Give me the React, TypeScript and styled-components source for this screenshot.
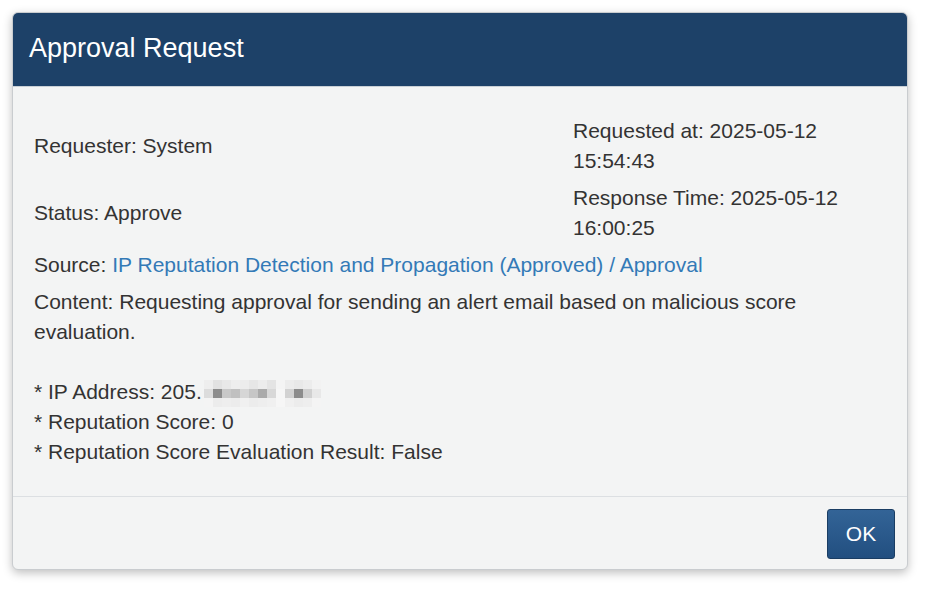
import React from "react";
import styled, { createGlobalStyle } from "styled-components";

const Global = createGlobalStyle`
  html, body { margin: 0; padding: 0; background: #ffffff; }
  body { font-family: "Liberation Sans", Arial, sans-serif; }
`;

const Page = styled.div`
  width: 931px;
  height: 593px;
  padding: 12px 23px 23px 12px;
  box-sizing: border-box;
  background: #ffffff;
`;

const Modal = styled.div`
  width: 896px;
  height: 558px;
  box-sizing: border-box;
  display: flex;
  flex-direction: column;
  background: #f3f4f4;
  border: 1px solid #c9cccf;
  border-radius: 6px;
  box-shadow: 0 3px 10px rgba(0, 0, 0, 0.25);
  overflow: hidden;
`;

const Header = styled.div`
  height: 74px;
  flex: none;
  background: #1d4168;
  display: flex;
  align-items: center;
  padding: 0 16px 4px;
  border-bottom: 1px solid #c9d0d6;
  box-sizing: border-box;
`;

const Title = styled.h1`
  margin: 0;
  color: #ffffff;
  font-weight: 400;
  font-size: 27px;
  line-height: 30px;
`;

const Body = styled.div`
  flex: 1;
  padding: 29px 22px 0 21px;
  color: #333333;
  font-size: 21px;
  line-height: 30px;
  display: flex;
  flex-direction: column;
  gap: 7px;
`;

const Row = styled.div`
  display: grid;
  grid-template-columns: 539px 312px;
  align-items: center;
`;

const Line = styled.div<{ $gap?: number }>`
  margin-top: ${(p) => p.$gap ?? 0}px;
`;

const Link = styled.a`
  color: #337ab7;
  text-decoration: none;
`;

const MosaicBox = styled.span`
  display: inline-block;
  overflow: hidden;
  vertical-align: -8px;
  margin-left: 2px;
`;

const MosaicGrid = styled.span`
  display: grid;
  grid-template-columns: repeat(13, 9px);
  grid-auto-rows: 9px;
`;

const Cell = styled.span<{ $v: number }>`
  background: ${(p) => `rgb(${p.$v},${p.$v},${p.$v})`};
`;

const Footer = styled.div`
  flex: none;
  border-top: 1px solid #dcdfe2;
  padding: 12px 12px 10px 0;
  display: flex;
  justify-content: flex-end;
`;

const OkButton = styled.button`
  width: 68px;
  height: 50px;
  border: 1px solid #1a3d63;
  border-radius: 3px;
  background: linear-gradient(#336497, #224f80);
  color: #ffffff;
  font-family: "Liberation Sans", Arial, sans-serif;
  font-size: 21px;
  cursor: pointer;
`;

const mosaic = [
  [238, 226, 232, 238, 236, 230, 236, 228, 244, 236, 232, 236, 242],
  [220, 140, 200, 192, 214, 198, 170, 216, 246, 210, 140, 208, 232],
  [244, 236, 238, 236, 240, 236, 238, 240, 246, 240, 236, 238, 244],
];

export default function App() {
  return (
    <>
      <Global />
      <Page>
        <Modal>
          <Header>
            <Title>Approval Request</Title>
          </Header>
          <Body>
            <Row>
              <div>Requester: System</div>
              <div>Requested at: 2025-05-12 15:54:43</div>
            </Row>
            <Row>
              <div>Status: Approve</div>
              <div>Response Time: 2025-05-12 16:00:25</div>
            </Row>
            <Line>
              Source:{" "}
              <Link href="#">IP Reputation Detection and Propagation (Approved) / Approval</Link>
            </Line>
            <Line $gap={0}>
              Content: Requesting approval for sending an alert email based on malicious score
              evaluation.
              <br />
              <br />* IP Address: 205.
              <MosaicBox>
                <MosaicGrid>
                  {mosaic.flat().map((v, i) => (
                    <Cell key={i} $v={v} />
                  ))}
                </MosaicGrid>
              </MosaicBox>
              <br />* Reputation Score: 0
              <br />* Reputation Score Evaluation Result: False
            </Line>
          </Body>
          <Footer>
            <OkButton>OK</OkButton>
          </Footer>
        </Modal>
      </Page>
    </>
  );
}
